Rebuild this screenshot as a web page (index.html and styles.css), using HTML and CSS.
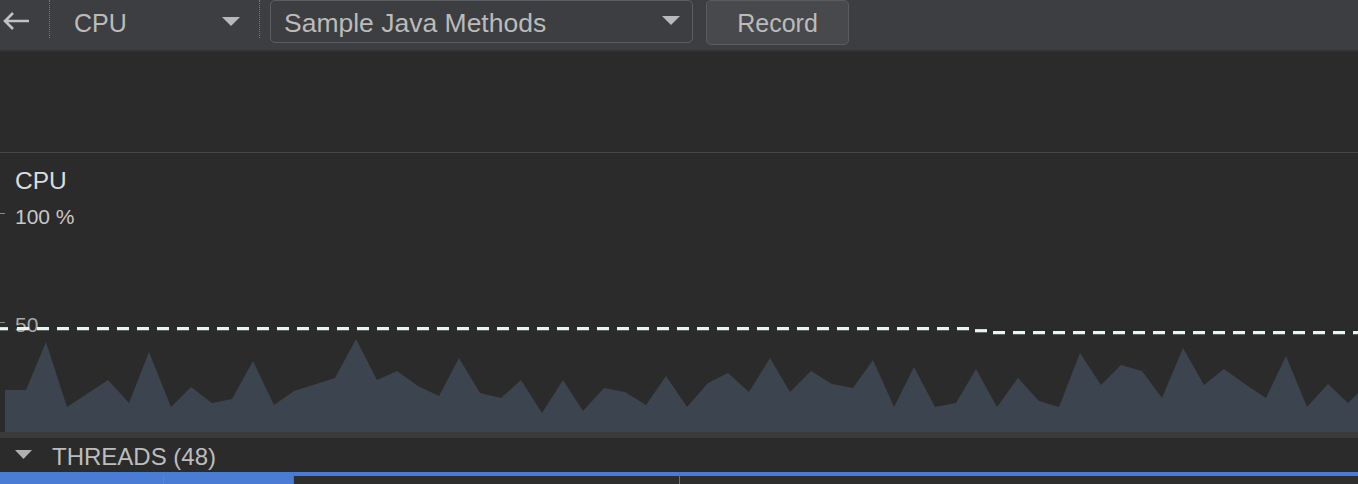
FILE: index.html
```html
<!DOCTYPE html>
<html>
<head>
<meta charset="utf-8">
<link rel="stylesheet" href="styles.css">
</head>
<body>
<div class="toolbar">
  <div class="back">
    <svg width="30" height="40" viewBox="0 0 30 40"><path d="M5 20 H29 M13 12 L5 20 L13 28" fill="none" stroke="#c2c2c2" stroke-width="2.6" stroke-linecap="butt" stroke-linejoin="miter"/></svg>
  </div>
  <div class="sep"></div>
  <div class="select">
    <span>CPU</span>
    <svg class="caret" width="18" height="9" viewBox="0 0 18 9"><path d="M0 0 H18 L9 9 Z" fill="#b9b9b9"/></svg>
  </div>
  <div class="sep"></div>
  <div class="combo">
    <span>Sample Java Methods</span>
    <svg class="caret" width="18" height="9" viewBox="0 0 18 9"><path d="M0 0 H18 L9 9 Z" fill="#b9b9b9"/></svg>
  </div>
  <button class="record">Record</button>
</div>
<div class="empty"></div>
<div class="cpu">
  <div class="cpu-title">CPU</div>
  <svg class="chart" width="1358" height="279" viewBox="0 153 1358 279">
    <polygon fill="#3c4450" points="5,432 5,390 26,390 46,342 67,407 108,380 129,403 149,352 171,407 191,387 212,403 232,399 253,361 274,405 294,391 335,378 356,339 377,380 397,371 418,386 439,396 459,358 480,393 501,398 521,380 542,413 563,380 583,411 604,388 625,392 646,405 666,376 687,407 708,383 728,373 749,392 770,358 790,392 811,371 832,384 853,388 873,360 894,407 914,367 935,407 956,403 976,369 997,407 1018,378 1039,401 1059,407 1080,353 1101,385 1121,365 1142,371 1162,398 1183,348 1204,385 1224,369 1245,384 1266,398 1286,356 1307,407 1328,384 1348,403 1358,393 1358,432"/>
    <line x1="0" y1="213.5" x2="5" y2="213.5" stroke="#8a8a8a" stroke-width="1"/>
    <line x1="0" y1="322.5" x2="5" y2="322.5" stroke="#8a8a8a" stroke-width="1"/>
  </svg>
  <div class="axis a100">100 %</div>
  <div class="axis a50">50</div>
  <svg class="dash" width="1358" height="279" viewBox="0 153 1358 279">
    <line x1="17" y1="328.7" x2="969" y2="328.7" stroke="#e6f7ef" stroke-width="3.2" stroke-dasharray="12 8"/>
    <line x1="0" y1="328.7" x2="8" y2="328.7" stroke="#e6f7ef" stroke-width="3.2"/>
    <line x1="975" y1="330.7" x2="987" y2="330.7" stroke="#e6f7ef" stroke-width="3.2"/>
    <line x1="993" y1="332.7" x2="1358" y2="332.7" stroke="#e6f7ef" stroke-width="3.2" stroke-dasharray="12 8"/>
  </svg>
</div>
<div class="band"></div>
<div class="threads">
  <svg class="tri" width="17" height="9" viewBox="0 0 17 9"><path d="M0 0 H17 L8.5 9 Z" fill="#b0b0b0"/></svg>
  <span>THREADS (48)</span>
</div>
<div class="timeline">
  <div class="seg sel s1"></div>
  <div class="seg sel s2"></div>
  <div class="seg s3"></div>
  <div class="seg s4"></div>
  <div class="seg s5"></div>
</div>
</body>
</html>
```
FILE: styles.css
```css
* { box-sizing: border-box; }
html, body { margin: 0; padding: 0; }
body {
  width: 1358px;
  height: 484px;
  overflow: hidden;
  background: #2b2b2b;
  font-family: "Liberation Sans", Arial, sans-serif;
  color: #bbbbbb;
}
.toolbar {
  height: 52px;
  background: #3d3e41;
  border-bottom: 2px solid #323234;
  display: flex;
  align-items: flex-start;
}
.back {
  width: 49px;
  height: 42px;
  display: flex;
  align-items: center;
}
.back svg { display: block; }
.sep {
  width: 1px;
  height: 38px;
  border-left: 1px dotted #76777a;
}
.select {
  width: 209px;
  height: 44px;
  padding-left: 24px;
  padding-right: 19px;
  display: flex;
  align-items: center;
  justify-content: space-between;
  font-size: 25px;
}
.select span, .combo span { margin-top: 3px; }
.caret { display: block; margin-top: -2px; }
.combo {
  margin-left: 10px;
  width: 423px;
  height: 43px;
  border: 1.5px solid #5c5e61;
  border-radius: 5px;
  padding-left: 13px;
  padding-right: 12px;
  display: flex;
  align-items: center;
  justify-content: space-between;
  font-size: 26.5px;
}
.record {
  margin-left: 13px;
  width: 143px;
  height: 45px;
  background: #47494c;
  border: 1.5px solid #5a5c5f;
  border-radius: 5px;
  color: #bbbbbb;
  font-family: "Liberation Sans", Arial, sans-serif;
  font-size: 25px;
  padding: 2px 0 0 0;
}
.empty {
  height: 101px;
  border-bottom: 1px solid #474747;
}
.cpu {
  position: relative;
  height: 279px;
}
.cpu-title {
  padding: 14px 0 0 15px;
  font-size: 24.5px;
  line-height: 28px;
  color: #dcdcdc;
}
.chart, .dash {
  position: absolute;
  left: 0;
  top: 0;
  display: block;
}
.axis {
  position: absolute;
  left: 15px;
  font-size: 21px;
  line-height: 24px;
  color: #c8c8c8;
}
.a100 { top: 52px; }
.a50 { top: 160px; color: #a9a9a9; }
.band {
  height: 6px;
  background: #3a3a3a;
}
.threads {
  height: 34px;
  display: flex;
  align-items: center;
  padding-left: 15px;
  font-size: 24px;
  color: #bdbdbd;
}
.tri { display: block; margin-right: 20px; margin-top: -1px; }
.threads span { margin-top: 3px; }
.timeline {
  height: 12px;
  display: flex;
  background: #2e2e2e;
}
.seg {
  border-top: 4px solid #4a7bd5;
  height: 12px;
}
.sel { background: #4a7bd5; }
.s1 { width: 163px; }
.s2 { width: 130px; border-left: 1px solid #5585dc; }
.s3 { width: 386px; border-left: 1px solid #6a6f78; }
.s4 { width: 515px; border-left: 1px solid #6a6f78; }
.s5 { flex: 1; }
```
